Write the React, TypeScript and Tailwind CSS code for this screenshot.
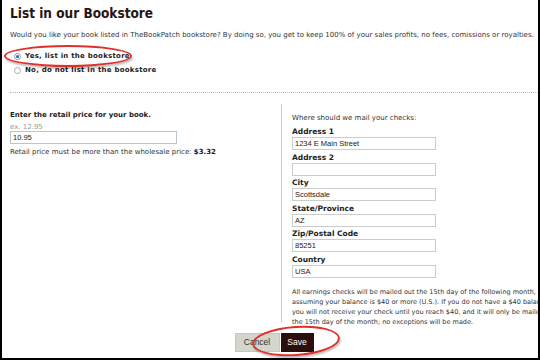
import React from "react";

const fields = [
  { label: "Address 1", value: "1234 E Main Street" },
  { label: "Address 2", value: "" },
  { label: "City", value: "Scottsdale" },
  { label: "State/Province", value: "AZ" },
  { label: "Zip/Postal Code", value: "85251" },
  { label: "Country", value: "USA" },
];

export default function App() {
  return (
    <div className="relative w-[540px] h-[360px] overflow-hidden bg-white border-l-2 border-r-2 border-b-2 border-black font-['DejaVu_Sans',sans-serif] text-[#222]">
      {/* Header */}
      <div className="pl-[8px] pt-[3px]">
        <h1 className="text-[13.5px] font-bold leading-[20px] text-[#2a1414] font-['DejaVu_Sans_Condensed','DejaVu_Sans',sans-serif]">
          List in our Bookstore
        </h1>
        <p className="mt-[7px] text-[7px] leading-[10px] text-[#333] whitespace-nowrap">
          Would you like your book listed in TheBookPatch bookstore? By doing so, you get to keep 100% of your sales profits, no fees, comissions or royalties.
        </p>
        <div className="mt-[11px] flex flex-col gap-[4px] pl-[4px] text-[7px] tracking-[0.25px] font-bold leading-[10px]">
          <label className="flex items-center gap-[4px]">
            <span className="w-[7px] h-[7px] rounded-full border border-[#8899aa] bg-white flex items-center justify-center">
              <span className="w-[3px] h-[3px] rounded-full bg-[#2a5f9e]" />
            </span>
            Yes, list in the bookstore
          </label>
          <label className="flex items-center gap-[4px]">
            <span className="w-[7px] h-[7px] rounded-full border border-[#aab] bg-white" />
            No, do not list in the bookstore
          </label>
        </div>
      </div>

      <div className="mt-[17px] ml-[8px] border-t border-dotted border-[#bbb]" />

      {/* Columns */}
      <div className="flex pl-[8px] pt-[11px]">
        <div className="w-[271px] shrink-0">
          <div className="pt-[6px] text-[7px] font-bold leading-[10px]">Enter the retail price for your book.</div>
          <div className="mt-[3px] text-[7px] leading-[8px] text-[#999]">ex. 12.95</div>
          <div className="w-[167px] h-[13px] border border-[#b8c4d0] px-[2px] text-[7.5px] leading-[11px] font-['Liberation_Sans',sans-serif] text-[#222]">
            10.95
          </div>
          <div className="mt-[3px] text-[7px] leading-[10px] text-[#333]">
            Retail price must be more than the wholesale price: <span className="font-bold text-[#222]">$3.32</span>
          </div>
        </div>
        <div className="border-l border-[#ccc] pl-[10px] h-[218px] shrink-0">
          <div className="pt-[9px] text-[7px] leading-[10px] text-[#333]">Where should we mail your checks:</div>
          <div className="mt-[4px] flex flex-col gap-[2.5px]">
            {fields.map((f) => (
              <div key={f.label}>
                <div className="text-[7.5px] font-bold leading-[10px] text-[#222]">{f.label}</div>
                <div className="w-[144px] h-[13px] border border-[#ccc] px-[2px] text-[7.5px] leading-[11px] font-['Liberation_Sans',sans-serif] text-[#222]">
                  {f.value}
                </div>
              </div>
            ))}
          </div>
          <p className="mt-[9px] text-[6.5px] leading-[10px] text-[#333] whitespace-nowrap">
            All earnings checks will be mailed out the 15th day of the following month,
            <br />
            assuming your balance is $40 or more (U.S.). If you do not have a $40 balance,
            <br />
            you will not receive your check until you reach $40, and it will only be mailed on
            <br />
            the 15th day of the month; no exceptions will be made.
          </p>
        </div>
      </div>

      {/* Buttons */}
      <div className="mt-[11px] flex justify-center pl-[8px]">
        <button className="w-[45px] h-[19px] bg-[#d2d6cc] text-[8.5px] text-[#333] font-['Liberation_Sans',sans-serif] border border-[#c4c8be]">
          Cancel
        </button>
        <button className="ml-[1px] w-[33px] h-[19px] bg-[#2b0e0e] text-[8.5px] text-white font-['Liberation_Sans',sans-serif]">
          Save
        </button>
      </div>

      {/* Highlight ellipses */}
      <div className="absolute left-[2px] top-[45px] w-[128px] h-[22px] rounded-[50%] border-2 border-[#e0302a] shadow-[1px_2px_2px_rgba(0,0,0,0.25)]" />
      <div className="absolute left-[250px] top-[326px] w-[88px] h-[30px] rounded-[50%] border-2 border-[#e0302a] shadow-[1px_2px_2px_rgba(0,0,0,0.25)] -rotate-[4deg]" />
    </div>
  );
}
